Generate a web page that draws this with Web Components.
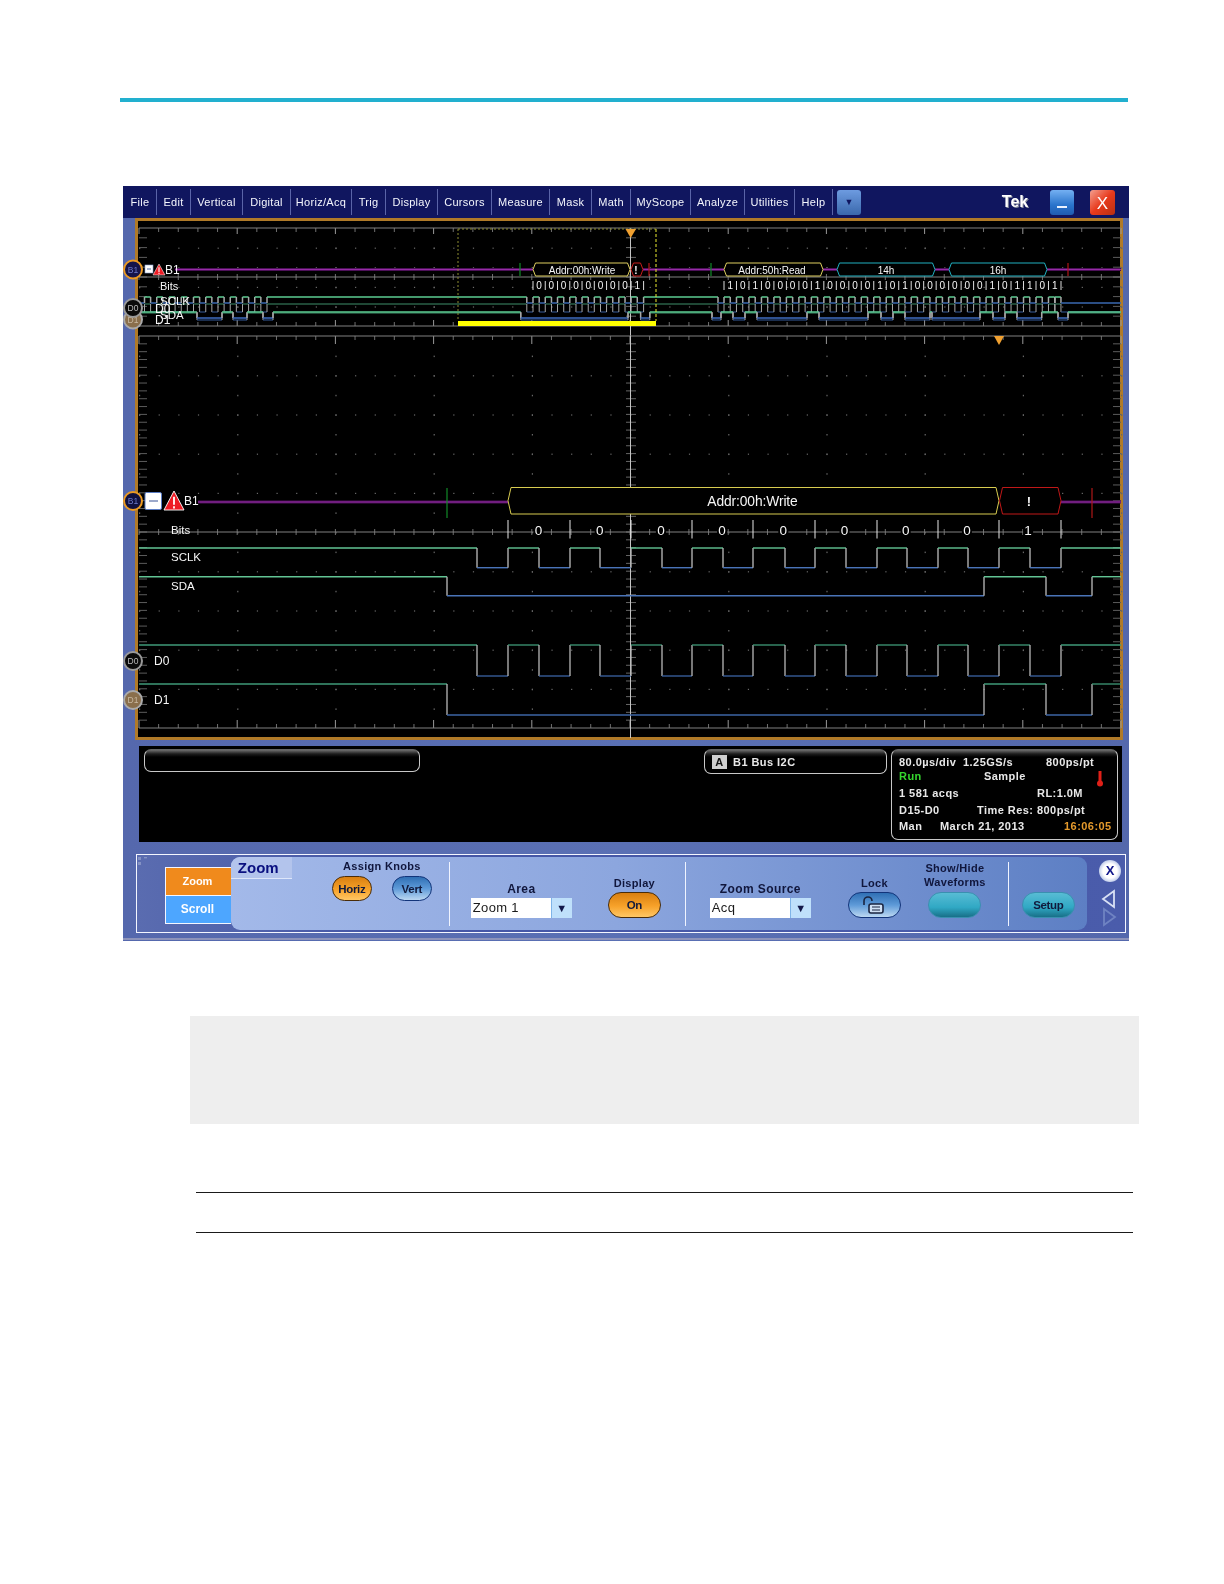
<!DOCTYPE html>
<html>
<head>
<meta charset="utf-8">
<title>Zoom</title>
<style>
  html, body { margin: 0; background: #fff; }
  body { font-family: "Liberation Sans", Arial, sans-serif; height: 1584px; overflow: hidden; }
</style>
</head>
<body>
<page-frame>
  <scope-window>
    <scope-menu slot="menu"></scope-menu>
    <scope-display slot="display"></scope-display>
    <scope-readout slot="readout"></scope-readout>
    <scope-controls slot="controls">
      <tek-pill tone="orange" slot="horiz">Horiz</tek-pill>
      <tek-pill tone="blue" slot="vert">Vert</tek-pill>
      <tek-select slot="area">Zoom 1</tek-select>
      <tek-pill tone="orange" wide slot="on">On</tek-pill>
      <tek-select slot="source">Acq</tek-select>
      <tek-pill tone="blue" wide slot="lock">
        <svg width="24" height="20" viewBox="0 0 24 20" fill="none" stroke="#1a2440" stroke-width="1.6">
          <path d="M2 10V6a4 4 0 0 1 8 0"/>
          <rect x="7" y="9" width="14" height="9" rx="2" fill="#cfe0f4"/>
          <path d="M10 12h8M10 15h8" stroke-width="1.2"/>
        </svg>
      </tek-pill>
      <tek-pill tone="teal" wide slot="waves"></tek-pill>
      <tek-pill tone="teal" wide slot="setup">Setup</tek-pill>
    </scope-controls>
  </scope-window>
</page-frame>

<script>
function simple(name, markup) {
  customElements.define(name, class extends HTMLElement {
    constructor() {
      super();
      this.attachShadow({ mode: 'open' }).innerHTML = markup;
    }
  });
}

simple('page-frame', `
  <style>
    :host { display: block; padding-top: 98px; }
    .teal { height: 4px; width: 1008px; margin-left: 120px; background: #22b0cf; }
    .shot { margin: 84px 0 0 123px; }
    .note { width: 949px; height: 108px; margin: 75px 0 0 190px; background: #eee; }
    .rules { margin: 68px 0 0 196px; width: 937px; height: 39px; border-top: 1.5px solid #1a1a1a; border-bottom: 1.5px solid #1a1a1a; }
  </style>
  <div class="teal"></div>
  <div class="shot"><slot></slot></div>
  <div class="note"></div>
  <div class="rules"></div>
`);

simple('scope-window', `
  <style>
    :host {
      display: flex; flex-direction: column; width: 1006px; height: 755px;
      background: linear-gradient(90deg, #5568ad, #5a70b4 50%, #5468ac);
      box-sizing: border-box; filter: blur(.3px);
    }
    .controls { margin-top: 12px; }
    .strip { height: 2px; margin-top: 5px; background: #8d93ba; }
  </style>
  <slot name="menu"></slot>
  <slot name="display"></slot>
  <slot name="readout"></slot>
  <div class="controls"><slot name="controls"></slot></div>
  <div class="strip"></div>
`);

const menuItems = [['File', 33], ['Edit', 34], ['Vertical', 52], ['Digital', 48], ['Horiz/Acq', 61], ['Trig', 34],
  ['Display', 52], ['Cursors', 54], ['Measure', 58], ['Mask', 42], ['Math', 39], ['MyScope', 60], ['Analyze', 54],
  ['Utilities', 50], ['Help', 38]];

simple('scope-menu', `
  <style>
    :host {
      display: flex; align-items: center; height: 32px; padding-left: 1px; background: #10165f; color: #f4f6fd;
      font: 11px "Liberation Sans", Arial, sans-serif;
    }
    .item { height: 26px; line-height: 26px; text-align: center; border-right: 1px solid #5a64a8; box-sizing: border-box; white-space: nowrap; letter-spacing: .3px; }
    button {
      all: unset; display: flex; align-items: center; justify-content: center; box-sizing: border-box;
      width: 24px; height: 25px; border-radius: 3px; color: #fff;
    }
    .more { margin-left: 4px; background: linear-gradient(#6d9be0, #3a68ac); color: #10165f; font-size: 9px; }
    .tek { margin-left: 133px; width: 42px; text-align: center; font-weight: bold; font-size: 16px; color: #fff; text-shadow: 1px 1px 0 #8a8f9e; }
    .min { margin-left: 14px; background: linear-gradient(#74b0f2, #2a74cc 60%, #1f5cb0); align-items: flex-end; padding-bottom: 7px; }
    .min i { width: 10px; height: 2px; background: #eaf2ff; }
    .close { margin-left: 16px; width: 25px; background: linear-gradient(135deg, #f4a090, #e83a1c 50%, #b83010); font-size: 17px; padding-top: 4px; }
  </style>
  ${menuItems.map(([t, w]) => `<div class="item" style="width:${w}px">${t}</div>`).join('')}
  <button class="more">&#9660;</button>
  <div class="tek">Tek</div>
  <button class="min"><i></i></button>
  <button class="close">X</button>
`);

// x, y below are page coordinates, the svg shifts them by translate()
function trace(x0, x1, level, edges, yHi, yLo, cHi, cLo, cV, w) {
  let out = '';
  let x = x0;
  const line = (a, b, c, d, col) => `<path d="M${a} ${b}L${c} ${d}" stroke="${col}" stroke-width="${w}"/>`;
  for (const e of edges.concat([x1])) {
    const y = level ? yHi : yLo;
    out += line(x, y, e, y, level ? cHi : cLo);
    if (e !== x1) out += line(e, yHi, e, yLo, cV);
    x = e;
    level = !level;
  }
  return out;
}

function bus(x0, x1, y0, y1, col, n) {
  const m = (y0 + y1) / 2;
  return `<path d="M${x0} ${m}L${x0 + n} ${y0}H${x1 - n}L${x1} ${m}L${x1 - n} ${y1}H${x0 + n}Z" fill="#000" stroke="${col}" stroke-width="1"/>`;
}

function purple(x0, x1, y) {
  return `<path d="M${x0} ${y}H${x1}" stroke="#4c1058" stroke-width="3"/><path d="M${x0} ${y}H${x1}" stroke="#962ca6" stroke-width="1"/>`;
}

function mark(x, y0, y1, col) {
  return `<path d="M${x} ${y0}V${y1}" stroke="${col}" stroke-width="1.2"/>`;
}

function label(x, y, t, size, extra = '') {
  return `<text x="${x}" y="${y}" font-size="${size}" fill="#f6f6f6" dominant-baseline="central" ${extra}>${t}</text>`;
}

function grat(top, bottom, rowH, tickStep, tall) {
  let s = '';
  const mid = (top + bottom) / 2;
  for (let k = 0; k <= 50; k++) {
    const x = 139 + k * 19.64;
    const major = k % 5 === 0;
    const h = major ? tall : 4;
    s += `<path d="M${x} ${top}v${h}M${x} ${bottom}v${-h}" stroke="${major ? '#999' : '#707070'}" stroke-width="1"/>`;
    s += `<path d="M${x} ${mid - 3}v6" stroke="#707070" stroke-width="1"/>`;
    for (let r = top + rowH; r < bottom - 1; r += rowH) {
      if (Math.abs(r - mid) > 1) s += `<rect x="${x}" y="${r}" width="1.2" height="1.2" fill="#6a6a6a"/>`;
    }
    if (major) {
      for (let y = top + 19.6; y < bottom; y += 19.6) s += `<rect x="${x}" y="${y}" width="1.2" height="1.5" fill="#666"/>`;
    }
  }
  for (let y = top + tickStep; y < bottom - 1; y += tickStep) {
    s += `<path d="M139 ${y}h8M1113 ${y}h8" stroke="#5c5c5c" stroke-width="1"/>`;
    s += `<path d="M626 ${y}h10" stroke="#666" stroke-width="1"/>`;
  }
  s += `<path d="M139 ${top}H1121M139 ${bottom}H1121M139 ${mid}H1121" stroke="#808080" stroke-width="1.2"/>`;
  s += `<path d="M630.5 ${top}V${bottom + 10}" stroke="#c4c4c4" stroke-width="1"/>`;
  return s;
}

function handle(x, y, text, fill, ring, col) {
  return `<circle cx="${x}" cy="${y}" r="9" fill="${fill}" stroke="${ring}" stroke-width="2"/>
    <text x="${x}" y="${y}" font-size="8.5" fill="${col}" text-anchor="middle" dominant-baseline="central">${text}</text>`;
}

function warn(x0, x1, y0, y1) {
  const c = (x0 + x1) / 2;
  const w = (x1 - x0) / 22;
  return `<path d="M${c} ${y0}L${x1} ${y1}H${x0}Z" fill="#ee1c25" stroke="#fff" stroke-width="${w}" stroke-linejoin="round"/>
    <path d="M${c} ${y0 + (y1 - y0) * .3}V${y0 + (y1 - y0) * .72}M${c} ${y0 + (y1 - y0) * .8}V${y0 + (y1 - y0) * .92}" stroke="#fff" stroke-width="${2 * w}"/>`;
}

function overview() {
  const clk = [];
  for (let k = 0; k <= 10; k++) {
    const r = 144.5 + k * 12.25;
    clk.push(r);
    if (k < 10) clk.push(r + 6.1);
  }
  clk.push(526.8);
  for (let k = 0; k < 9; k++) {
    clk.push(533 + k * 12.26);
    clk.push(539.2 + k * 12.26);
  }
  clk.push(643.6);
  clk.push(718);
  for (let k = 0; k <= 27; k++) {
    clk.push(724 + k * 12.48);
    if (k < 27) clk.push(730.24 + k * 12.48);
  }
  clk.splice(clk.length - 1, 0, 1055);
  const sda = [197, 222, 233, 247, 263, 273, 520.8, 628, 640.6, 649.8, 712, 721, 733, 745, 757, 807, 819, 868, 881, 893, 905, 930, 932, 980, 993, 1005, 1017, 1041.7, 1058, 1068];
  let s = grat(228, 326, 19.6, 9.8, 6);

  s += trace(139, 1121, false, clk, 304, 312, '#3f8f6a', '#345a9a', '#a8a8a8', 1);
  s += trace(139, 1121, true, sda, 313, 320, '#3f8f6a', '#345a9a', '#a8a8a8', 1);
  s += trace(139, 1121, false, clk, 297, 303, '#5ccc92', '#3a68b0', '#a8a8a8', 1.5);
  s += trace(139, 1121, true, sda, 312, 318, '#5ccc92', '#3f6cc0', '#a8a8a8', 1.5);

  s += purple(175, 533, 269.5) + purple(643, 724, 269.5) + purple(823, 837, 269.5) + purple(935, 949, 269.5) + purple(1047, 1121, 269.5);
  s += mark(520, 263, 276, '#128a28') + mark(649, 263, 276, '#b01818') + mark(711, 263, 276, '#128a28') + mark(1068, 263, 276, '#b01818');
  s += bus(533, 630, 263, 276, '#e0d060', 2.5) + bus(631, 643, 263, 276, '#c81c1c', 2.5);
  s += bus(724, 823, 263, 276, '#e0d060', 2.5) + bus(837, 935, 263, 276, '#20b0c0', 2.5) + bus(949, 1047, 263, 276, '#20b0c0', 2.5);
  s += label(582, 270, 'Addr:00h:Write', 10, 'text-anchor="middle"') + label(636, 270, '!', 10, 'text-anchor="middle" font-weight="bold"');
  s += label(772, 270, 'Addr:50h:Read', 10, 'text-anchor="middle"') + label(886, 270, '14h', 10, 'text-anchor="middle"') + label(998, 270, '16h', 10, 'text-anchor="middle"');

  [0, 0, 0, 0, 0, 0, 0, 0, 1].forEach((b, i) => {
    s += label(533 + 12.26 * (i + .5), 285.5, b, 10, 'text-anchor="middle"');
    s += `<path d="M${533 + 12.26 * i} 281v9" stroke="#ddd"/>`;
  });
  s += `<path d="M643.6 281v9" stroke="#ddd"/>`;
  [1, 0, 1, 0, 0, 0, 0, 1, 0, 0, 0, 0, 1, 0, 1, 0, 0, 0, 0, 0, 0, 1, 0, 1, 1, 0, 1].forEach((b, i) => {
    s += label(724 + 12.48 * (i + .5), 285.5, b, 10, 'text-anchor="middle"');
    s += `<path d="M${724 + 12.48 * i} 281v9" stroke="#ddd"/>`;
  });
  s += `<path d="M1061 281v9" stroke="#ddd"/>`;

  s += `<path d="M458 229V321" stroke="#8c8c30" stroke-dasharray="2 2"/><path d="M458 229H656" stroke="#8c8c30" stroke-dasharray="2 2"/>`;
  s += `<path d="M656 229V321" stroke="#eaea30" stroke-dasharray="3 2"/>`;
  s += `<rect x="458" y="321" width="198" height="5" fill="#ffff00"/>`;
  s += `<path d="M625.5 229H636L630.7 238Z" fill="#f0a030"/>`;

  s += `<rect x="145" y="265" width="8" height="8" fill="#fff" stroke="#8aa0d0" stroke-width=".6"/><path d="M147 269h4" stroke="#5068a0"/>`;
  s += warn(153, 165, 264, 275);
  s += label(165, 269.5, 'B1', 12);
  s += label(160, 285.5, 'Bits', 11) + label(160, 301, 'SCLK', 11.5) + label(160, 315, 'SDA', 11.5);
  s += label(155, 308.5, 'D0', 12) + label(155, 319.5, 'D1', 12);
  s += handle(133, 319.5, 'D1', '#8a6f4c', '#aaa', '#c8b8a0') + handle(133, 308, 'D0', '#0a0a0a', '#9a9a9a', '#bbb');
  s += handle(133, 269.5, 'B1', '#14144a', '#eb9a22', '#6a78c8');
  return s;
}

function zoomed() {
  const clk = [477, 508, 539, 570, 600, 631, 662, 692, 723, 753, 785, 815, 846, 877, 907, 938, 968, 999, 1030, 1061];
  const sda = [447, 984, 1046, 1092];
  let s = grat(336, 728, 39.2, 7.84, 8);

  s += trace(139, 1121, true, clk, 548, 567.7, '#62c494', '#4a74b8', '#b0b0b0', 1.4);
  s += trace(139, 1121, true, sda, 576.7, 595.7, '#62c494', '#4a74b8', '#b0b0b0', 1.4);
  s += trace(139, 1121, true, clk, 645, 676, '#3f9a78', '#3c64a4', '#b8b8b8', 1.3);
  s += trace(139, 1121, true, sda, 684, 715, '#3f9a78', '#3c64a4', '#b8b8b8', 1.3);

  s += purple(198, 508, 502) + purple(1061, 1121, 502);
  s += mark(447, 488, 518, '#128a28') + mark(1092, 488, 518, '#b01818');
  s += bus(508, 999, 487.5, 514, '#d8cc50', 3) + bus(999.5, 1061, 487.5, 514, '#c01818', 3);
  s += label(752.5, 501, 'Addr:00h:Write', 13.8, 'text-anchor="middle" letter-spacing="-.1"');
  s += label(1029, 501, '!', 13, 'text-anchor="middle" font-weight="bold"');

  [508, 570, 631, 692, 753, 815, 877, 938, 999, 1061].forEach(x => {
    s += `<path d="M${x} 520v18.5" stroke="#e8e8e8" stroke-width="1"/>`;
  });
  [0, 0, 0, 0, 0, 0, 0, 0, 1].forEach((b, i) => {
    s += `<rect x="${533.5 + i * 61.2}" y="522" width="10" height="16" fill="#000"/>`;
    s += label(538.5 + i * 61.2, 530, b, 13.5, 'text-anchor="middle"');
  });

  s += `<path d="M994 336H1004L999 345Z" fill="#f0a030"/>`;

  s += label(171, 530, 'Bits', 11.5) + label(171, 557, 'SCLK', 11.5) + label(171, 586, 'SDA', 11.5);
  s += label(154, 661, 'D0', 12) + label(154, 700, 'D1', 12) + label(184, 501, 'B1', 12);
  s += `<rect x="145" y="492.5" width="16.5" height="17" rx="1.5" fill="#fff" stroke="#5a7cc4" stroke-width="1"/><path d="M149 501h9" stroke="#5a70a8" stroke-width="1.2"/>`;
  s += warn(164, 184, 491, 510);
  s += handle(133, 501, 'B1', '#10103e', '#eb9a22', '#6a78c8');
  s += handle(133, 661, 'D0', '#0a0a0a', '#9a9a9a', '#bbb');
  s += handle(133, 700, 'D1', '#8a6f4c', '#aaa', '#c8b8a0');
  return s;
}

customElements.define('scope-display', class extends HTMLElement {
  constructor() {
    super();
    this.attachShadow({ mode: 'open' }).innerHTML = `
      <style>
        :host { display: block; width: 988px; height: 522px; margin-left: 12px; box-sizing: border-box; border: 3px solid #b07a28; background: #000; }
        svg { display: block; overflow: visible; font-family: "Liberation Sans", Arial, sans-serif; }
      </style>
      <svg width="982" height="516" viewBox="0 0 982 516" fill="none">
        <g transform="translate(-138 -221)">${overview()}${zoomed()}</g>
      </svg>`;
  }
});

simple('scope-readout', `
  <style>
    :host {
      display: flex; align-items: flex-start; width: 983px; height: 96px; margin: 6px 0 0 16px; padding-top: 3px; box-sizing: border-box;
      background: #000; color: #e8e8e8; font: bold 11px "Liberation Sans", Arial, sans-serif; letter-spacing: .45px;
    }
    .pill {
      box-sizing: border-box; border: 1px solid #c8c8c8; border-top-color: #666; border-radius: 7px;
      background: linear-gradient(#6e6e6e, #1c1c1c 4px, #000 7px);
    }
    .msg { width: 276px; height: 23px; margin-left: 5px; }
    .bus { display: flex; align-items: center; gap: 6px; width: 183px; height: 25px; margin-left: 284px; padding-left: 7px; }
    .bus b { width: 15px; height: 14px; line-height: 14px; text-align: center; background: #cfcfcf; color: #111; }
    .info { width: 227px; height: 91px; margin-left: 4px; padding: 5px 0 0 7px; }
    .row { display: flex; align-items: center; height: 14px; white-space: nowrap; }
    .row + .row.m3 { margin-top: 3px; }
    .row + .row.m2 { margin-top: 2px; }
    .run { color: #35d62e; }
    .clock { color: #e59a2c; }
    svg { margin-top: 6px; }
  </style>
  <div class="pill msg"></div>
  <div class="pill bus"><b>A</b><span>B1 Bus I2C</span></div>
  <div class="pill info">
    <div class="row"><span style="width:64px">80.0µs/div</span><span style="width:83px">1.25GS/s</span><span>800ps/pt</span></div>
    <div class="row"><span class="run" style="width:85px">Run</span><span style="width:112px">Sample</span>
      <svg width="8" height="16" viewBox="0 0 8 16"><path d="M4 0V12" stroke="#e02018" stroke-width="3" stroke-linecap="round"/><circle cx="4" cy="12.5" r="3" fill="#e02018"/></svg></div>
    <div class="row m3"><span style="width:138px">1 581 acqs</span><span>RL:1.0M</span></div>
    <div class="row m3"><span style="width:78px">D15-D0</span><span>Time Res: 800ps/pt</span></div>
    <div class="row m2"><span style="width:41px">Man</span><span style="width:124px">March 21, 2013</span><span class="clock">16:06:05</span></div>
  </div>
`);

simple('tek-pill', `
  <style>
    :host {
      display: inline-flex; align-items: center; justify-content: center; box-sizing: border-box;
      width: 40px; height: 25px; border-radius: 13px; color: #111a3c;
      font: bold 11.5px "Liberation Sans", Arial, sans-serif; letter-spacing: -.3px;
      border: 1px solid #1e3468;
    }
    :host([wide]) { width: 53px; height: 26px; }
    :host([tone="orange"]) { background: linear-gradient(#d97f10, #f7a22a 55%, #ffc765); border-color: #4a2c08; }
    :host([tone="blue"]) { background: linear-gradient(#2f6fb4, #5e9ad8 50%, #bcd8f2); border-color: #12347a; }
    :host([tone="teal"]) { background: linear-gradient(#58bcd4, #30a8c4 60%, #187088); border-color: #3a90b0; }
  </style>
  <slot></slot>
`);

simple('tek-select', `
  <style>
    :host {
      display: flex; width: 101px; height: 20px; background: #fff; color: #1a1a1a;
      font: 13px "Liberation Sans", Arial, sans-serif; letter-spacing: .3px;
    }
    .v { flex: 1; padding-left: 2px; line-height: 20px; box-sizing: border-box; }
    .a { width: 21px; background: #bfe0fb; color: #12184a; text-align: center; line-height: 20px; font-size: 11px; border-left: 1px solid #7fb4e8; box-sizing: border-box; }
  </style>
  <div class="v"><slot></slot></div>
  <div class="a">&#9660;</div>
`);

simple('scope-controls', `
  <style>
    :host {
      display: flex; box-sizing: border-box; width: 990px; height: 79px; margin-left: 13px;
      border: 1px solid #f4f6ff; position: relative; color: #10163c;
      font: bold 11px "Liberation Sans", Arial, sans-serif;
      background: linear-gradient(90deg, #5a6cb0, #4556a6 25%, #4a5cab);
    }
    .grip { position: absolute; left: 1px; top: 2px; width: 11px; height: 10px; }
    .tabs { display: flex; flex-direction: column; width: 66px; margin: 12px 0 0 28px; height: 57px; box-sizing: border-box; border: 1px solid #f4f6ff; border-right: 0; color: #fff; text-align: center; text-indent: -2px; }
    .tabs div { flex: 1; line-height: 27px; }
    .tabs .z { background: #f08a1c; border-bottom: 1px solid #f4f6ff; }
    .tabs .s { background: #4da6ff; font-size: 12px; }
    .panel {
      display: flex; width: 858px; height: 73px; margin-top: 2px; border-radius: 9px;
      background: linear-gradient(90deg, #a3b9e9, #8ca6de 45%, #5d7fc4);
    }
    .tab { width: 61px; height: 22px; line-height: 21px; padding-left: 7px; box-sizing: border-box; background: #b3c4ec; border-bottom: 1px solid #dde6fa; border-radius: 9px 0 0 0; font-size: 15px; color: #0a1080; }
    .sep { width: 1px; height: 64px; margin-top: 5px; background: #f0f4ff; flex: none; }
    .knobs { width: 157px; padding-left: 23px; padding-top: 2px; box-sizing: border-box; display: flex; flex-direction: column; align-items: center; gap: 3px; }
    .knobs .r { display: flex; gap: 20px; }
    .knobs span { line-height: 14px; letter-spacing: .3px; }
    .sec { display: flex; align-items: flex-end; padding-bottom: 12px; box-sizing: border-box; height: 73px; }
    .col { display: flex; flex-direction: column; align-items: center; }
    .col span { line-height: 14px; white-space: nowrap; text-align: center; }
    .big { font-size: 12px; letter-spacing: .4px; margin-bottom: 2px; }
    .small { letter-spacing: .3px; margin-bottom: 2px; }
    .tight { width: 54px; }
    .tight span { margin: 0 -10px 3px; }
    .side { display: flex; flex-direction: column; align-items: center; width: 38px; padding: 5px 0 0 8px; box-sizing: border-box; }
    .x { width: 22px; height: 22px; border-radius: 50%; background: radial-gradient(#fff 45%, #b8c6e8 75%, #7f8fc0); color: #10168a; font-size: 13px; line-height: 22px; text-align: center; }
  </style>
  <svg class="grip" viewBox="0 0 11 10" fill="#8492c4"><rect x="0" y="0" width="3" height="3"/><rect x="6" y="0" width="3" height="1.4"/><rect x="0" y="5" width="3" height="3"/></svg>
  <div class="tabs"><div class="z">Zoom</div><div class="s">Scroll</div></div>
  <div class="panel">
    <div class="tab">Zoom</div>
    <div class="knobs">
      <span>Assign Knobs</span>
      <div class="r"><slot name="horiz"></slot><slot name="vert"></slot></div>
    </div>
    <div class="sep"></div>
    <div class="sec" style="width:235px;padding-left:21px;gap:36px">
      <div class="col"><span class="big">Area</span><slot name="area"></slot></div>
      <div class="col"><span class="small">Display</span><slot name="on"></slot></div>
    </div>
    <div class="sep"></div>
    <div class="sec" style="width:322px;padding-left:24px">
      <div class="col"><span class="big">Zoom Source</span><slot name="source"></slot></div>
      <div class="col" style="margin-left:37px"><span class="small">Lock</span><slot name="lock"></slot></div>
      <div class="col tight" style="margin-left:27px"><span class="small">Show/Hide<br>Waveforms</span><slot name="waves"></slot></div>
    </div>
    <div class="sep"></div>
    <div class="sec" style="padding-left:13px"><slot name="setup"></slot></div>
  </div>
  <div class="side">
    <div class="x">X</div>
    <svg width="18" height="40" viewBox="0 0 18 40" fill="none" style="margin-top:5px">
      <path d="M13 4L2 12L13 20Z" stroke="#d8e0f4" stroke-width="1.8"/>
      <path d="M3 22L14 30L3 38Z" stroke="#6f83c2" stroke-width="1.8"/>
    </svg>
  </div>
`);
</script>
</body>
</html>
